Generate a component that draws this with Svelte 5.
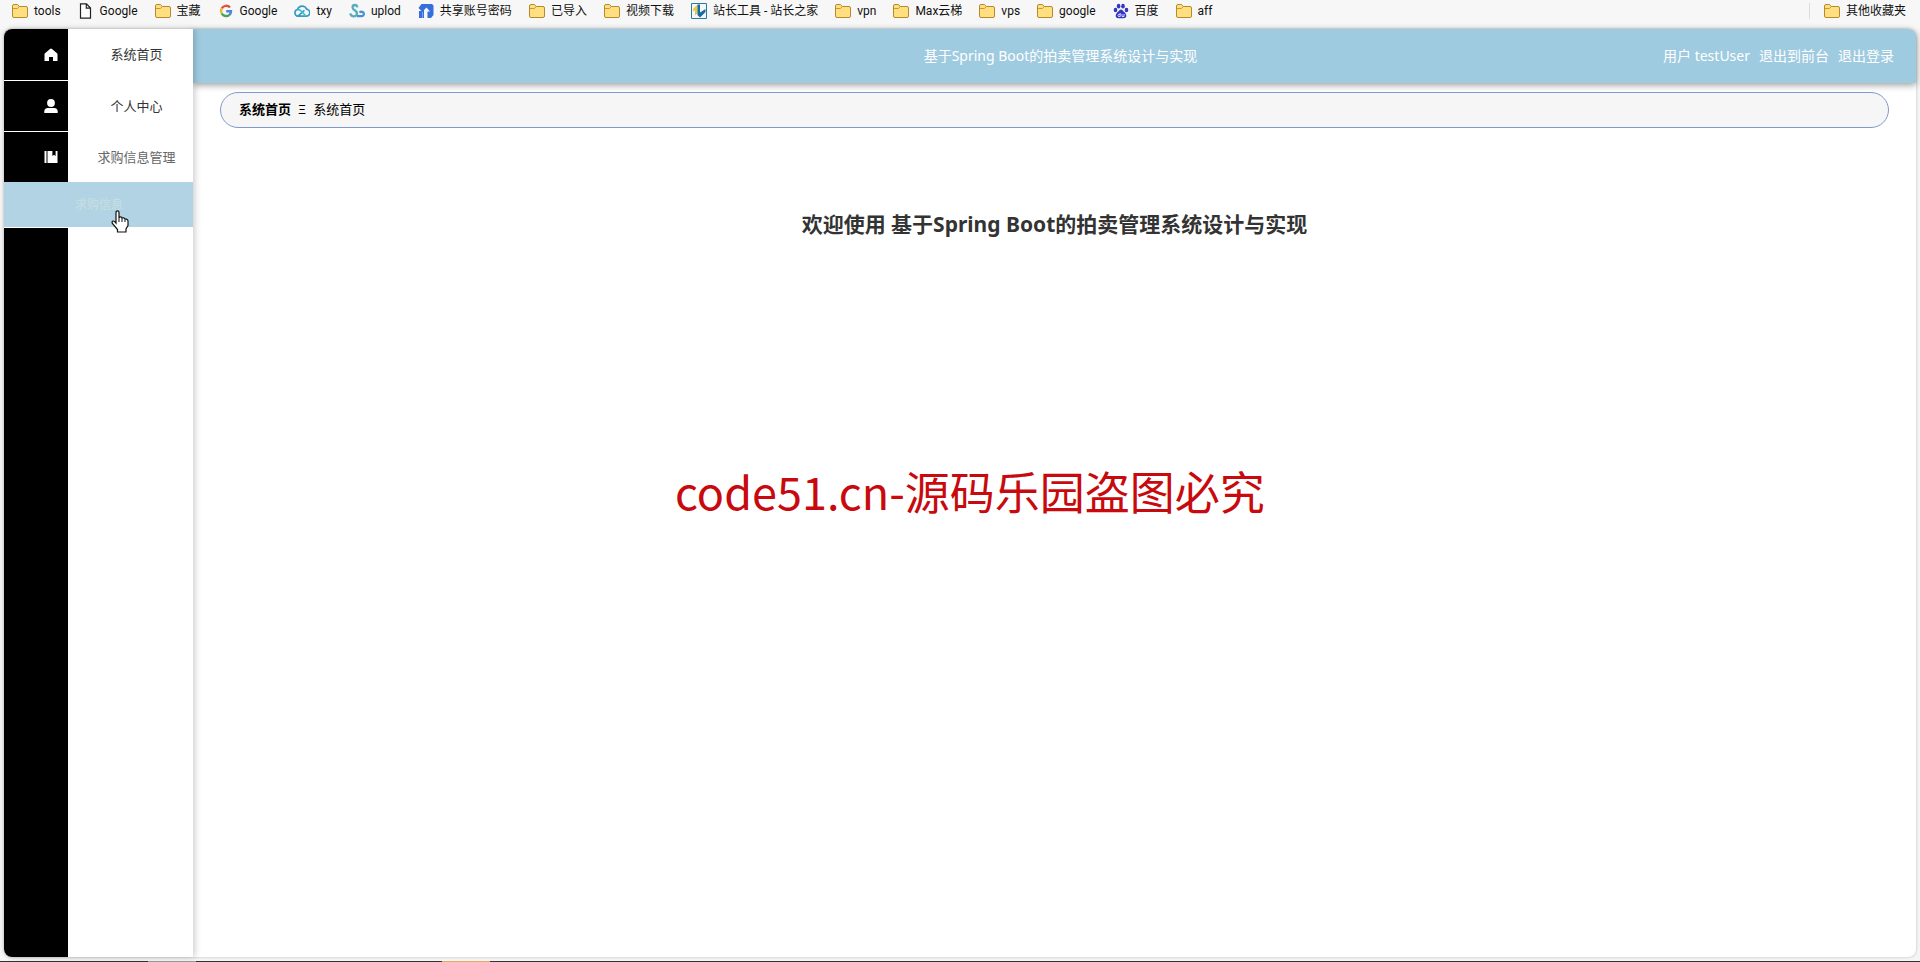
<script>
  const bookmarks = [
    { icon: 'folder', label: 'tools' },
    { icon: 'page', label: 'Google' },
    { icon: 'folder', label: '宝藏' },
    { icon: 'google', label: 'Google' },
    { icon: 'cloud', label: 'txy' },
    { icon: 'upload', label: 'uplod' },
    { icon: 'share', label: '共享账号密码' },
    { icon: 'folder', label: '已导入' },
    { icon: 'folder', label: '视频下载' },
    { icon: 'zz', label: '站长工具 - 站长之家' },
    { icon: 'folder', label: 'vpn' },
    { icon: 'folder', label: 'Max云梯' },
    { icon: 'folder', label: 'vps' },
    { icon: 'folder', label: 'google' },
    { icon: 'baidu', label: '百度' },
    { icon: 'folder', label: 'aff' }
  ];

  const menu = [
    { icon: 'home', label: '系统首页' },
    { icon: 'user', label: '个人中心' },
    { icon: 'book', label: '求购信息管理', open: true }
  ];

  const title = '基于Spring Boot的拍卖管理系统设计与实现';
</script>

{#snippet bookmarkIcon(name)}
  <svg class="bm-icon" viewBox="0 0 16 16" aria-hidden="true">
    {#if name === 'folder'}
      <path d="M.5 3Q.5 1.5 2 1.5H5.5L7.2 3.5H14Q15.5 3.5 15.5 5V13Q15.5 14.5 14 14.5H2Q.5 14.5.5 13Z" fill="#ffdf80" stroke="#b48a2c" />
      <path d="M1 5.5H5.5L7.2 3.6" fill="none" stroke="#c79b38" />
    {:else if name === 'page'}
      <path d="M2.5 .8H8.5L12.5 5V15.2H2.5ZM8.3 1V5.2H12.3" fill="#fff" stroke="#222" stroke-width="1.2" />
    {:else if name === 'google'}
      <g fill="none" stroke-width="2.4">
        <path d="M12 4.6A5 5 0 0 0 3.8 5.4" stroke="#e0533f" />
        <path d="M3.8 5.4A5 5 0 0 0 3.8 10.6" stroke="#e9b83a" />
        <path d="M3.8 10.6A5 5 0 0 0 11.4 11.8" stroke="#4aa35c" />
        <path d="M11.4 11.8A5 5 0 0 0 13 8.2H8.2" stroke="#4c85dd" />
      </g>
    {:else if name === 'cloud'}
      <path d="M4 13.2A3.4 3.4 0 0 1 3.6 6.5A4.8 4.8 0 0 1 12.6 6.2A3.5 3.5 0 0 1 12 13.2H4L10.4 7.4" fill="none" stroke="#389bc4" stroke-width="1.7" />
      <path d="M3.8 6.6Q6 6.2 8.2 9L12 13.2" fill="none" stroke="#3fc0c4" stroke-width="1.7" />
    {:else if name === 'upload'}
      <path d="M8.4 4.4Q8 2 5.8 2Q3.4 2.2 3.6 4.6Q3.8 6.2 6 7.4Q8.6 9 7.8 11.4Q6.8 13.6 4.4 13.4Q1.6 13 1.4 10.4" fill="none" stroke="#57aebe" stroke-width="2.3" />
      <path d="M8 13.2H12.8A2.3 2.3 0 1 0 10.6 9.6" fill="none" stroke="#4893cf" stroke-width="2.3" />
    {:else if name === 'share'}
      <path d="M3.5 1H14L15.5 2.5V12L13 15H9.5V8.5H12L8.5 4.5L6 7V15H1V8H3.5L.5 5Z" fill="#356fdd" />
      <path d="M4.5 9V15" stroke="#7fa4ee" />
    {:else if name === 'zz'}
      <path d="M.5.5H15.5V15.5H.5Z" fill="#f3f8f8" stroke="#277ca0" />
      <path d="M2 6L6.5 1.5V10L4 12.5V7L2 8.5Z" fill="#e6c93f" />
      <path d="M6.5 1.5H9V9.5L14.5 6V9L9 14.5L6.5 12Z" fill="#176ba2" />
    {:else}
      <g fill="#3437c4">
        <ellipse cx="2.5" cy="7" rx="1.8" ry="2.3" />
        <ellipse cx="5.6" cy="3.2" rx="1.8" ry="2.4" />
        <ellipse cx="10" cy="3.2" rx="1.8" ry="2.4" />
        <ellipse cx="13.5" cy="7" rx="1.8" ry="2.3" />
        <path d="M8 6.5Q9.4 6.5 10.4 8.3Q13.8 11 13.3 13.4Q12.6 15.8 8 15.2Q3.4 15.8 2.7 13.4Q2.2 11 5.6 8.3Q6.6 6.5 8 6.5Z" />
      </g>
      <path d="M7.2 10V13.5H5.5Q4.5 12.5 5.5 11.4H7M9 11V13.5H11V11" fill="none" stroke="#fff" stroke-width=".8" />
    {/if}
  </svg>
{/snippet}

<div class="browser">
  <nav class="bookmarks" aria-label="bookmarks">
    {#each bookmarks as item}
      <a href="#bookmark">{@render bookmarkIcon(item.icon)}{item.label}</a>
    {/each}
    <a class="other" href="#bookmark">{@render bookmarkIcon('folder')}其他收藏夹</a>
  </nav>

  <div class="app">
    <aside>
      <ul class="menu">
        {#each menu as item}
          <li>
            <a class="menu-item" class:open={item.open} href="#menu">
              <span class="icon-cell">
                <svg viewBox="0 0 14 14" aria-hidden="true">
                  {#if item.icon === 'home'}
                    <path d="M7 .5Q7.5.5 8 .9L13 5.2Q13.5 5.7 13.5 6.3V13H9V9H5V13H.5V6.3Q.5 5.7 1 5.2L6 .9Q6.5.5 7 .5Z" />
                  {:else if item.icon === 'user'}
                    <circle cx="7" cy="4" r="3.9" />
                    <path d="M.3 14V12.5Q.3 9 4 9H10Q13.7 9 13.7 12.5V14Z" />
                  {:else}
                    <path d="M.5 1H2.5V13H.5ZM3.5 1H8.4V6L10 4.8L11.6 6V1H13.5V13H3.5Z" />
                  {/if}
                </svg>
              </span>
              <span class="label">{item.label}</span>
            </a>
          </li>
        {/each}
      </ul>
      <a class="sub-item" href="#menu">求购信息</a>
      <div class="rail"></div>
      <svg class="pointer" viewBox="0 0 18 23" aria-hidden="true">
        <path d="M5 13V2.5Q5 .8 6.5.8Q8 .8 8 2.5V8Q8 6.8 9.5 6.8Q11 6.8 11 8.5Q11.2 7.6 12.5 7.8Q14 8 14 9.5Q14.3 8.8 15.5 9.1Q17 9.5 17 11V15.5L15 19V22H6.5V19.5L1.4 13.5Q.5 11.5 2 11Q3.2 10.8 5 13Z" fill="#fff" stroke="#111" stroke-width="1.2" />
        <path d="M8 8V12M11 8.5V12M14 9.5V12" stroke="#111" />
      </svg>
    </aside>

    <div class="content">
      <header>
        <span class="title">{title}</span>
        <div class="account">
          <span>用户 testUser</span>
          <a href="#front">退出到前台</a>
          <a href="#logout">退出登录</a>
        </div>
      </header>
      <main>
        <nav class="breadcrumb" aria-label="breadcrumb">
          <b>系统首页</b><span>Ξ</span><span>系统首页</span>
        </nav>
        <h1>欢迎使用 {title}</h1>
      </main>
    </div>
  </div>

  <div class="taskbar"><i class="light"></i><i class="orange"></i></div>
  <div class="watermark">code51.cn-源码乐园盗图必究</div>
</div>

<style>
  :global(body) {
    margin: 0;
    background: #f5f5f5;
  }

  .browser {
    position: relative;
    display: flex;
    flex-direction: column;
    min-height: 100vh;
    font-family: "Noto Sans", "Noto Sans CJK SC", sans-serif;
    font-size: 14px;
  }

  a {
    color: inherit;
    text-decoration: none;
  }

  .bookmarks {
    display: flex;
    align-items: center;
    gap: 17px;
    height: 22px;
    padding: 0 14px 7px 12px;
    background: #f7f7f7;
    font-family: Roboto, "Noto Sans CJK SC", sans-serif;
    font-size: 12px;
    color: #111;
    white-space: nowrap;
  }

  .bookmarks a {
    display: flex;
    align-items: center;
    gap: 6px;
    line-height: 16px;
  }

  .bm-icon {
    width: 16px;
    height: 16px;
  }

  .bookmarks .other {
    margin-left: auto;
    padding-left: 14px;
    border-left: 1px solid #ddd;
  }

  .app {
    flex: 1;
    display: flex;
    margin: 0 4px 4px;
    border-radius: 8px;
    background: #fff;
    box-shadow: 0 0 3px #bbb;
  }

  aside {
    position: relative;
    z-index: 1;
    display: flex;
    flex-direction: column;
    width: 189px;
    border-radius: 8px 0 0 8px;
    background: #fff;
    box-shadow: 2px 0 6px rgba(0, 0, 0, 0.2);
  }

  .menu {
    margin: 0;
    padding: 0;
    list-style: none;
  }

  .menu-item {
    display: flex;
    height: 51px;
    box-sizing: border-box;
    font-size: 13px;
    color: #333;
  }

  li + li .menu-item {
    border-top: 1px solid #fff;
  }

  .menu-item.open {
    color: #666;
  }

  .icon-cell {
    display: flex;
    align-items: center;
    justify-content: flex-end;
    width: 64px;
    padding-right: 10px;
    box-sizing: border-box;
    background: #000;
  }

  li:first-child .icon-cell {
    border-top-left-radius: 8px;
  }

  .icon-cell svg {
    width: 14px;
    height: 14px;
    fill: #fff;
  }

  .label {
    flex: 1;
    padding-left: 12px;
    line-height: 50px;
    text-align: center;
  }

  .sub-item {
    padding-left: 71px;
    border-bottom: 1px solid #fff;
    background: #b1d3e4;
    font-size: 12px;
    line-height: 45px;
    color: #c9dfe2;
  }

  .rail {
    flex: 1;
    width: 64px;
    border-bottom-left-radius: 8px;
    background: #000;
  }

  .pointer {
    position: absolute;
    top: 181px;
    left: 107px;
    width: 18px;
    height: 23px;
  }

  .content {
    flex: 1;
  }

  header {
    display: grid;
    grid-template-columns: 1fr auto 1fr;
    align-items: center;
    height: 52px;
    padding: 0 22px 2px 34px;
    border-top-right-radius: 8px;
    background: #9fcbe0;
    box-shadow: 0 2px 7px rgba(0, 0, 0, 0.4);
    color: #fff;
  }

  .title {
    grid-column: 2;
  }

  .account {
    display: flex;
    justify-content: flex-end;
    gap: 9px;
  }

  main {
    padding: 9px 27px;
  }

  .breadcrumb {
    display: flex;
    align-items: center;
    gap: 7px;
    padding: 0 18px;
    border: 1px solid #8299cd;
    border-radius: 18px;
    background: #f6f6f6;
    font-size: 13px;
    line-height: 32px;
    padding-bottom: 2px;
    color: #000;
  }

  h1 {
    margin: 80px 0 0;
    font-size: 21px;
    line-height: 32px;
    text-align: center;
    color: #333;
  }

  .watermark {
    position: absolute;
    top: 50%;
    left: 675px;
    margin-top: -20px;
    font-family: "Noto Sans CJK SC", sans-serif;
    font-size: 45px;
    line-height: 60px;
    color: #c80a0e;
    white-space: nowrap;
    pointer-events: none;
  }

  .taskbar {
    display: flex;
    height: 1px;
    background: #333;
  }

  .taskbar i {
    width: 48px;
    margin-left: 148px;
    background: #999;
  }

  .taskbar .orange {
    margin-left: 246px;
    background: #e8a860;
  }
</style>
